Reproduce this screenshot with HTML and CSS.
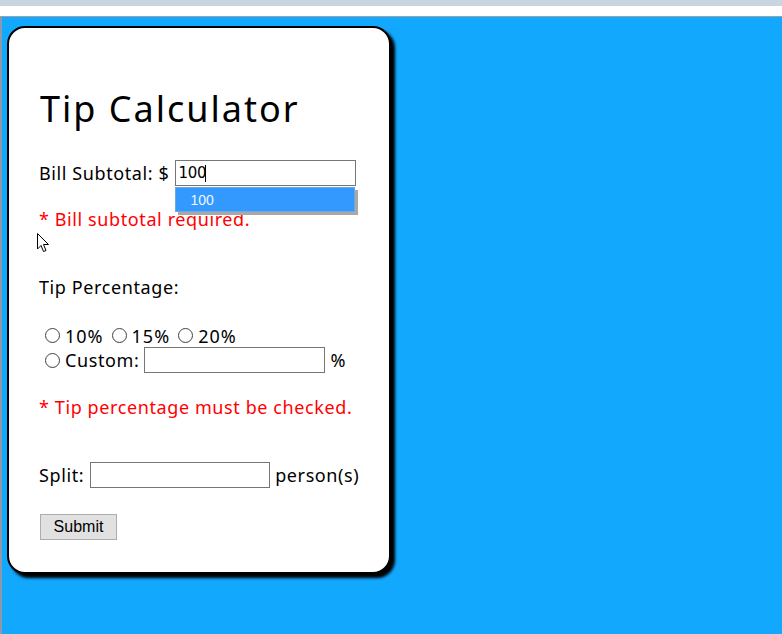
FILE: index.html
```html
<!DOCTYPE html>
<html>
<head>
<meta charset="utf-8">
<link rel="stylesheet" href="styles.css">
</head>
<body>
<div class="chrome-top"></div>
<div class="chrome-white"></div>
<div class="viewport">
  <form class="card">
    <h1 class="title">Tip Calculator</h1>
    <div class="row bill-row">
      <span>Bill Subtotal: $</span>
      <span class="field-wrap">
        <input class="field bill" type="text" value="100"><span class="caret"></span>
        <div class="suggest"><span>100</span></div>
      </span>
    </div>
    <div class="error err1">* Bill subtotal required.</div>
    <div class="row label-row">Tip Percentage:</div>
    <div class="row radios">
      <input type="radio" name="tip" class="radio"><span class="rlabel">10%</span><input type="radio" name="tip" class="radio"><span class="rlabel">15%</span><input type="radio" name="tip" class="radio"><span class="rlabel">20%</span>
    </div>
    <div class="row custom-row">
      <input type="radio" name="tip" class="radio"><span class="rlabel">Custom:</span><input class="field custom" type="text"><span class="pct">%</span>
    </div>
    <div class="error err2">* Tip percentage must be checked.</div>
    <div class="row split-row">
      <span>Split:</span><input class="field split" type="text"><span class="persons">person(s)</span>
    </div>
    <div class="submit-row"><button type="button" class="submit">Submit</button></div>
    <svg class="pointer" width="13" height="20" viewBox="0 0 13 20"><path d="M0.5 0.5 L0.5 16 L4 12.5 L6.5 18.5 L9 17.5 L6.5 11.5 L11.5 11.5 Z" fill="#fff" stroke="#000" stroke-width="1" stroke-linejoin="miter"/></svg>
  </form>
</div>
</body>
</html>
```
FILE: styles.css
```css
html, body {
  margin: 0;
  padding: 0;
  height: 100%;
  overflow: hidden;
}
body {
  background: #fff;
  font-family: "Noto Sans", "DejaVu Sans", sans-serif;
  display: flex;
  flex-direction: column;
}
.chrome-top {
  height: 6px;
  background: #c9d5e1;
}
.chrome-white {
  height: 10px;
  background: #fff;
  border-bottom: 1px solid #a0a0a0;
}
.viewport {
  flex: 1;
  background: #12a8fe;
  border-left: 2px solid #8a9aa8;
  padding: 9px 0 0 5px;
}
.card {
  position: relative;
  box-sizing: border-box;
  width: 384px;
  height: 548px;
  background: #fff;
  border: 2px solid #000;
  border-radius: 18px;
  box-shadow: 4px 4px 3px #000;
  padding: 59px 0 0 30px;
  color: #000;
  font-size: 18px;
  letter-spacing: 0.6px;
}
.title {
  margin: 0;
  font-size: 36px;
  line-height: 44px;
  font-weight: normal;
  letter-spacing: 2px;
  padding-left: 1px;
}
.row {
  display: flex;
  align-items: center;
  white-space: nowrap;
}
.bill-row {
  margin-top: 29px;
  height: 26px;
}
.field-wrap {
  position: relative;
  display: inline-flex;
  align-items: center;
  margin-left: 6px;
}
.field {
  box-sizing: border-box;
  height: 26px;
  border: 1px solid #767676;
  background: #fff;
  padding: 0 2px;
  font-family: "DejaVu Sans", sans-serif;
  font-size: 15px;
  letter-spacing: -0.3px;
  color: #000;
  outline: none;
}
.bill {
  width: 181px;
}
.caret {
  position: absolute;
  left: 30px;
  top: 5px;
  width: 1px;
  height: 17px;
  background: #000;
}
.suggest {
  position: absolute;
  left: 0;
  top: 27px;
  width: 180px;
  height: 25px;
  box-sizing: border-box;
  background: #3399ff;
  border: 1px solid #6fa8dc;
  box-shadow: 3px 3px 0 #a8a8a8;
  color: #eef6ff;
  font-family: "Liberation Sans", Arial, sans-serif;
  font-size: 14px;
  letter-spacing: 0;
  display: flex;
  align-items: center;
  padding-left: 14px;
}
.error {
  color: #ff0000;
  line-height: 24px;
}
.err1 {
  margin-top: 21px;
}
.label-row {
  margin-top: 44px;
  height: 24px;
}
.radios {
  margin-top: 25px;
  height: 23px;
}
.radio {
  appearance: none;
  -webkit-appearance: none;
  box-sizing: border-box;
  width: 15px;
  height: 15px;
  margin: 0 5px 0 6px;
  border: 1px solid #444;
  border-radius: 50%;
  background: radial-gradient(circle at 50% 40%, #fff 55%, #e6e6e6 100%);
  flex: none;
}
.radios .rlabel {
  letter-spacing: 1px;
}
.radios .rlabel + .radio {
  margin-left: 8px;
}
.custom-row {
  height: 26px;
}
.custom {
  width: 181px;
  margin-left: 5px;
}
.pct {
  margin-left: 5px;
}
.err2 {
  margin-top: 22px;
}
.split-row {
  margin-top: 43px;
  height: 26px;
}
.split {
  width: 180px;
  margin-left: 6px;
}
.persons {
  margin-left: 5px;
}
.submit-row {
  margin-top: 26px;
  height: 26px;
  display: flex;
}
.submit {
  box-sizing: border-box;
  width: 77px;
  height: 26px;
  margin: 0 0 0 1px;
  background: #e1e1e1;
  border: 1px solid #adadad;
  font-family: "Liberation Sans", Arial, sans-serif;
  font-size: 16px;
  letter-spacing: 0;
  color: #000;
  padding: 0;
}
.pointer {
  position: absolute;
  left: 28px;
  top: 205px;
}
```
